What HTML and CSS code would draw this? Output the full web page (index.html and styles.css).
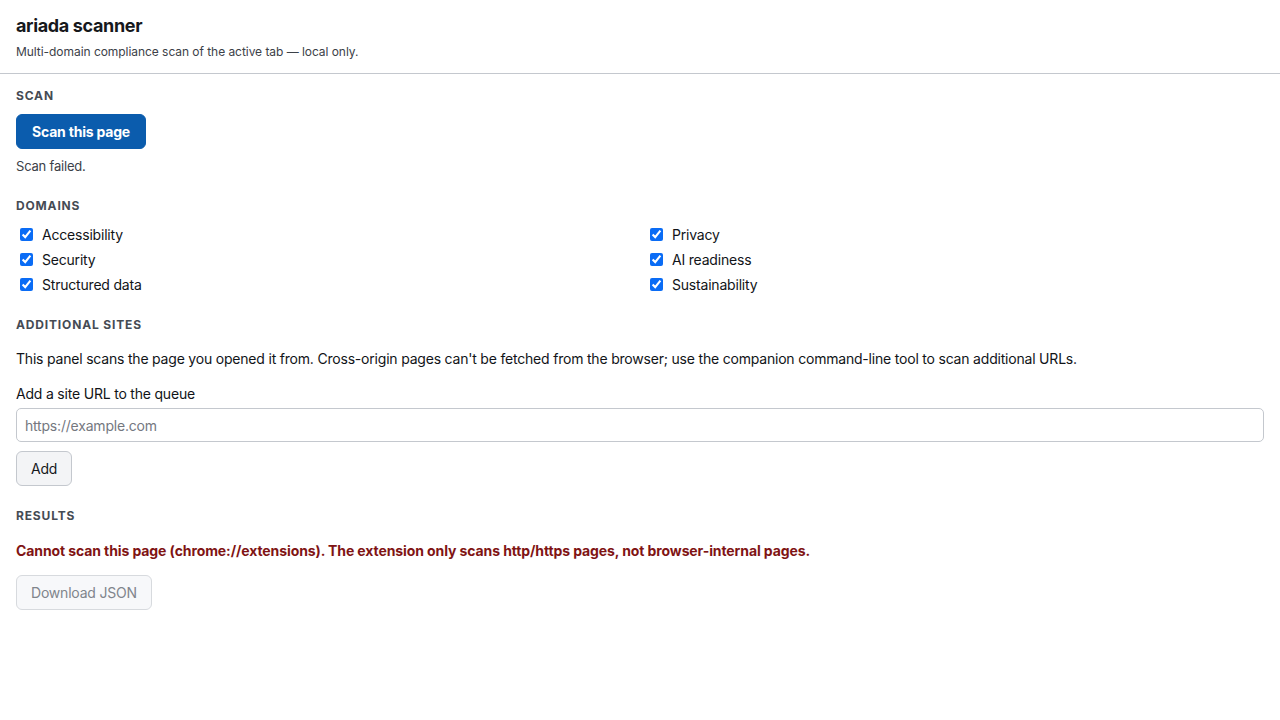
FILE: index.html
```html
<!DOCTYPE html>
<html lang="en">
<head>
<meta charset="utf-8">
<title>ariada scanner</title>
<link rel="stylesheet" href="styles.css">
</head>
<body>
<header class="header">
  <h1 class="title">ariada scanner</h1>
  <p class="subtitle">Multi-domain compliance scan of the active tab — local only.</p>
</header>
<main class="main">
  <section class="section">
    <h2 class="section-title">Scan</h2>
    <button class="btn btn-primary" type="button">Scan this page</button>
    <p class="status">Scan failed.</p>
  </section>
  <section class="section">
    <h2 class="section-title">Domains</h2>
    <div class="domains">
      <label class="domain"><input type="checkbox" checked> Accessibility</label>
      <label class="domain"><input type="checkbox" checked> Privacy</label>
      <label class="domain"><input type="checkbox" checked> Security</label>
      <label class="domain"><input type="checkbox" checked> AI readiness</label>
      <label class="domain"><input type="checkbox" checked> Structured data</label>
      <label class="domain"><input type="checkbox" checked> Sustainability</label>
    </div>
  </section>
  <section class="section">
    <h2 class="section-title">Additional sites</h2>
    <p class="note">This panel scans the page you opened it from. Cross-origin pages can't be fetched from the browser; use the companion command-line tool to scan additional URLs.</p>
    <label class="field-label" for="url">Add a site URL to the queue</label>
    <input class="text-input" id="url" type="text" placeholder="https://example.com">
    <button class="btn btn-secondary" type="button">Add</button>
  </section>
  <section class="section section-results">
    <h2 class="section-title">Results</h2>
    <p class="error">Cannot scan this page (chrome://extensions). The extension only scans http/https pages, not browser-internal pages.</p>
    <button class="btn btn-secondary" type="button" disabled>Download JSON</button>
  </section>
</main>
</body>
</html>
```
FILE: styles.css
```css
* { box-sizing: border-box; }
html, body {
  margin: 0;
  background: #ffffff;
  font-family: Inter, "Liberation Sans", sans-serif;
  color: #111418;
  font-size: 14px;
  letter-spacing: -0.2px;
}
.header {
  padding: 13px 16px 13px;
  border-bottom: 1px solid #c4c8ce;
}
.title {
  margin: 0;
  font-size: 18px;
  line-height: 26px;
  font-weight: 700;
  letter-spacing: -0.35px;
  color: #16181c;
}
.subtitle {
  margin: 5px 0 0;
  font-size: 12px;
  line-height: 16px;
  letter-spacing: -0.05px;
  color: #3c4148;
}
.main {
  padding: 13px 16px 0;
  display: flex;
  flex-direction: column;
  gap: 22px;
}
.section {
  display: flex;
  flex-direction: column;
  align-items: flex-start;
}
.section-results { margin-top: -1px; }
.section-title {
  margin: 0 0 11px;
  padding-top: 1px;
  font-size: 12px;
  line-height: 15px;
  font-weight: 700;
  text-transform: uppercase;
  letter-spacing: 0.07em;
  color: #454b54;
}
.btn {
  font-family: inherit;
  font-size: 14px;
  line-height: 18px;
  letter-spacing: -0.2px;
  border-radius: 6px;
  padding: 8px 15px;
  cursor: pointer;
}
.btn-primary {
  height: 35px;
  background: #0b5cad;
  color: #ffffff;
  border: 1px solid #0b5cad;
  font-weight: 700;
}
.btn-secondary {
  height: 35px;
  background: #f3f4f6;
  color: #16181c;
  border: 1px solid #c4c8ce;
  font-weight: 400;
  padding: 8px 14px;
}
.btn-secondary:disabled {
  background: #f7f8fa;
  color: #80858c;
  border-color: #d7dade;
  cursor: default;
}
.status {
  margin: 8px 0 0;
  padding-top: 1px;
  font-size: 13px;
  line-height: 17px;
  color: #3c4148;
}
.domains {
  display: grid;
  grid-template-columns: 1fr 1fr;
  column-gap: 12px;
  row-gap: 5px;
  width: 100%;
}
.domain {
  display: flex;
  align-items: center;
  padding-top: 1px;
  line-height: 19px;
  font-size: 14px;
  gap: 9px;
}
.domain input {
  margin: 0 0 0 4px;
  width: 13px;
  height: 13px;
  accent-color: #0a6cf5;
}
.note {
  margin: 5px 0 0;
  padding-top: 1px;
  line-height: 19px;
}
.field-label {
  margin-top: 15px;
  padding-top: 1px;
  line-height: 19px;
}
.text-input {
  margin-top: 5px;
  width: 100%;
  height: 34px;
  padding: 0 8px;
  font-family: inherit;
  font-size: 14px;
  letter-spacing: -0.2px;
  border: 1px solid #c4c8ce;
  border-radius: 5px;
  color: #16181c;
  background: #ffffff;
}
.text-input::placeholder { color: #74787f; }
.text-input + .btn { margin-top: 9px; }
.error {
  margin: 6px 0 15px;
  padding-top: 1px;
  line-height: 19px;
  font-weight: 700;
  letter-spacing: -0.1px;
  color: #7f1414;
}
```
